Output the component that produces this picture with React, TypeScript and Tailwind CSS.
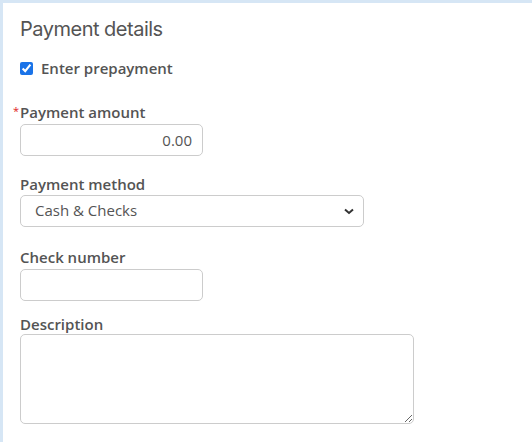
const labelCls = "block text-[15px] font-semibold text-[#545454] leading-5";
const boxCls = "rounded-[5px] border border-[#cccccc] text-[15px] text-[#545454] bg-white outline-none";

export default function App() {
  return (
    <div className="w-[532px] h-[442px] bg-[#d6e6f5] pl-[3px] pt-[3px] font-['Open_Sans',sans-serif]">
      <div className="h-full bg-white pl-[17px] pt-[14px]">
        <h2 className="text-[20px] leading-6 text-[#545454] font-['Inter',sans-serif] tracking-[-0.5px]">
          Payment details
        </h2>

        <label className="mt-[16px] flex items-center gap-[8px] text-[15px] font-semibold text-[#545454]">
          <input type="checkbox" defaultChecked className="w-[13px] h-[13px] accent-[#1a73e8]" />
          Enter prepayment
        </label>

        {/* Payment amount */}
        <div className="mt-[22px] relative">
          <span className="absolute -left-[7px] top-[1px] text-[#e02020] text-[11px]">*</span>
          <label className={labelCls}>Payment amount</label>
          <input
            defaultValue="0.00"
            className={`${boxCls} mt-[2px] w-[183px] h-[32px] px-[10px] text-right`}
          />
        </div>

        {/* Payment method */}
        <div className="mt-[18px]">
          <label className={labelCls}>Payment method</label>
          <div className="relative mt-[1px] w-[344px]">
            <select className={`${boxCls} appearance-none w-full h-[32px] pl-[14px]`}>
              <option>Cash &amp; Checks</option>
            </select>
            <svg
              className="absolute right-[10px] top-[13px] pointer-events-none"
              width="10"
              height="7"
              viewBox="0 0 10 7"
              fill="none"
              stroke="#333"
              strokeWidth="2"
            >
              <path d="M1 1.5 L5 5 L9 1.5" />
            </svg>
          </div>
        </div>

        {/* Check number */}
        <div className="mt-[20px]">
          <label className={labelCls}>Check number</label>
          <input className={`${boxCls} mt-[2px] w-[183px] h-[32px] px-[10px]`} />
        </div>

        {/* Description */}
        <div className="mt-[13px]">
          <label className={labelCls}>Description</label>
          <textarea className={`${boxCls} block w-[394px] h-[90px] px-[10px]`} />
        </div>
      </div>
    </div>
  );
}
